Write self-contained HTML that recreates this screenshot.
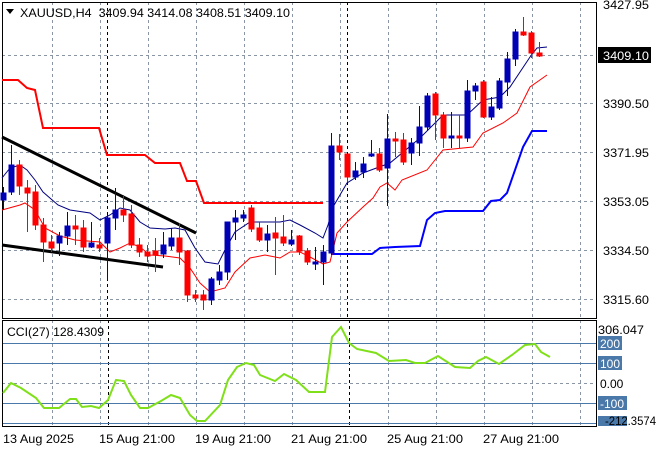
<!DOCTYPE html>
<html><head><meta charset="utf-8"><style>
html,body{margin:0;padding:0;background:#fff;}
svg{display:block;font-family:"Liberation Sans",Tahoma,sans-serif;}
</style></head><body>
<svg width="660" height="450" viewBox="0 0 660 450" xmlns="http://www.w3.org/2000/svg">
<rect width="660" height="450" fill="#fff"/>
<g stroke="#8a96a3" stroke-width="1" stroke-dasharray="3,3" fill="none">
<path d="M2 55.5H597M2 103.5H597M2 152.5H597M2 201.5H597M2 250.5H597M2 299.5H597"/>
<path d="M52.5 2V318M100.5 2V318M148.5 2V318M196.5 2V318M244.5 2V318M292.5 2V318M340.5 2V318M388.5 2V318M436.5 2V318M484.5 2V318M532.5 2V318M580.5 2V318"/>
<path d="M52.5 320V426M100.5 320V426M148.5 320V426M196.5 320V426M244.5 320V426M292.5 320V426M388.5 320V426M436.5 320V426M484.5 320V426M532.5 320V426M580.5 320V426"/>
<path d="M2 383.5H597"/>
</g>
<g stroke="#000" stroke-dasharray="3,3"><path d="M107.5 2V318M347.5 2V318M108.5 320V426M349.5 320V426"/></g>
<g stroke="#4a78a8" stroke-width="1"><path d="M2 343.5H597M2 363.5H597M2 403.5H597M2 423.5H597"/></g>
<rect x="2.5" y="2.5" width="594" height="316" fill="none" stroke="#000"/>
<rect x="2.5" y="320.5" width="594" height="106" fill="none" stroke="#000"/>
<polyline fill="none" stroke="#f00" stroke-width="2" points="2,80 18,80 27,88 35,90 43,128 99,128 107,155 145,155 155,163 180,163 187,181 196,181 204,203 323,203"/>
<polyline fill="none" stroke="#00f" stroke-width="2" points="331,254 372,254 380,248 395,247 420,246 427,220 435,213 445,211 483,211 491,201 500,200 507,193 523,147 532,131 547,131"/>
<line x1="2" y1="137" x2="196" y2="233" stroke="#000" stroke-width="3"/>
<line x1="2" y1="245" x2="163" y2="267" stroke="#000" stroke-width="3"/>
<polyline fill="none" stroke="#000080" stroke-width="1" points="2,178 10,168 20,165 27,170 35,180 43,192 58,205 70,210 90,213 100,220 110,215 120,208 130,210 140,222 150,228 165,229 175,228 185,230 195,248 205,262 218,264 225,250 235,232 250,222 265,222 280,222 290,220 300,225 315,233 323,238 328,225 333,207 347,183 363,173 390,163 420,138 443,115 467,115 483,100 500,97 510,87 530,57 537,48 547,47"/>
<polyline fill="none" stroke="#f00" stroke-width="1" points="2,210 20,205 25,203 35,210 45,228 60,236 75,240 100,242 110,252 120,248 130,243 140,247 150,255 165,256 180,258 190,268 200,283 210,292 225,288 235,272 250,258 265,255 280,258 290,252 300,252 310,257 323,264 330,262 333,250 337,233 347,222 363,207 373,198 380,187 387,183 395,190 402,180 427,170 443,150 473,147 483,133 503,123 517,113 530,87 547,75"/>
<g>
<g stroke="#0000b4" fill="#0000b4">
<path d="M3.5 187V210M11.5 145V195M59.5 232V256M67.5 212V245M91.5 222V248M107.5 215V280M115.5 188V230M163.5 232V258M171.5 228V250M211.5 277V305M219.5 265V285M227.5 222V280M235.5 210V240M243.5 210V222M267.5 225V252M291.5 230V246M315.5 247V270M323.5 245V285M331.5 133V255M355.5 162V180M363.5 157V178M371.5 140V157M387.5 114V206M411.5 138V165M419.5 106V156M427.5 93V131M451.5 112V148M467.5 80V142M475.5 83V100M491.5 97V120M499.5 78V110M507.5 52V96M515.5 29V66"/>
<rect x="1" y="193" width="5" height="7"/><rect x="9" y="165" width="5" height="27"/><rect x="57" y="236" width="5" height="7"/><rect x="65" y="226" width="5" height="10"/><rect x="89" y="243" width="5" height="4"/><rect x="105" y="218" width="5" height="25"/><rect x="113" y="210" width="5" height="8"/><rect x="161" y="245" width="5" height="9"/><rect x="169" y="238" width="5" height="8"/><rect x="209" y="279" width="5" height="21"/><rect x="217" y="272" width="5" height="8"/><rect x="225" y="222" width="5" height="50"/><rect x="233" y="218" width="5" height="4"/><rect x="241" y="215" width="5" height="3"/><rect x="265" y="234" width="5" height="6"/><rect x="289" y="240" width="5" height="4"/><rect x="313" y="262" width="5" height="2"/><rect x="321" y="252" width="5" height="10"/><rect x="329" y="146" width="5" height="107"/><rect x="353" y="171" width="5" height="6"/><rect x="361" y="164" width="5" height="8"/><rect x="369" y="154" width="5" height="2"/><rect x="385" y="139" width="5" height="29"/><rect x="409" y="143" width="5" height="10"/><rect x="417" y="127" width="5" height="16"/><rect x="425" y="96" width="5" height="31"/><rect x="449" y="136" width="5" height="2"/><rect x="465" y="91" width="5" height="47"/><rect x="473" y="86" width="5" height="5"/><rect x="489" y="107" width="5" height="10"/><rect x="497" y="81" width="5" height="27"/><rect x="505" y="59" width="5" height="23"/><rect x="513" y="32" width="5" height="27"/>
</g>
<g stroke="#f00" fill="#f00">
<path d="M19.5 160V195M27.5 180V232M35.5 185V230M43.5 218V262M51.5 235V252M75.5 215V245M83.5 220V252M99.5 238V252M123.5 195V222M131.5 205V248M139.5 238V257M147.5 245V262M155.5 238V272M179.5 223V265M187.5 250V302M195.5 290V302M203.5 290V310M251.5 205V232M259.5 222V242M275.5 217V275M283.5 215V246M299.5 235V255M307.5 248V265M339.5 134V160M347.5 154V182M379.5 148V172M395.5 132V157M403.5 133V165M435.5 92V140M443.5 112V148M459.5 115V148M483.5 80V118M523.5 17V36M531.5 31V58M539.5 42V57"/>
<rect x="17" y="165" width="5" height="21"/><rect x="25" y="188" width="5" height="5"/><rect x="33" y="192" width="5" height="33"/><rect x="41" y="225" width="5" height="17"/><rect x="49" y="242" width="5" height="6"/><rect x="73" y="226" width="5" height="3"/><rect x="81" y="228" width="5" height="19"/><rect x="97" y="245" width="5" height="3"/><rect x="121" y="210" width="5" height="5"/><rect x="129" y="214" width="5" height="31"/><rect x="137" y="245" width="5" height="7"/><rect x="145" y="252" width="5" height="4"/><rect x="153" y="251" width="5" height="4"/><rect x="177" y="238" width="5" height="14"/><rect x="185" y="251" width="5" height="44"/><rect x="193" y="295" width="5" height="3"/><rect x="201" y="295" width="5" height="5"/><rect x="249" y="208" width="5" height="21"/><rect x="257" y="228" width="5" height="12"/><rect x="273" y="233" width="5" height="5"/><rect x="281" y="237" width="5" height="6"/><rect x="297" y="236" width="5" height="15"/><rect x="305" y="251" width="5" height="11"/><rect x="337" y="146" width="5" height="6"/><rect x="345" y="154" width="5" height="23"/><rect x="377" y="154" width="5" height="16"/><rect x="393" y="139" width="5" height="2"/><rect x="401" y="140" width="5" height="22"/><rect x="433" y="94" width="5" height="21"/><rect x="441" y="115" width="5" height="23"/><rect x="457" y="136" width="5" height="2"/><rect x="481" y="82" width="5" height="35"/><rect x="521" y="32" width="5" height="3"/><rect x="529" y="33" width="5" height="20"/><rect x="537" y="53" width="5" height="3"/>
</g>
</g>
<polyline fill="none" stroke="#7fe019" stroke-width="2" points="3,393 11,383 21,388 36,398 44,408 59,408 70,399 76,399 82,407 91,406 99,408 108,400 116,380 124,381 131,395 140,408 148,408 161,401 171,395 180,398 190,415 197,421 205,421 220,405 228,380 237,367 246,363 254,365 260,375 275,381 284,374 296,380 309,392 325,392 332,337 341,327 349,343 357,349 376,353 389,361 406,360 415,363 425,363 438,356 455,367 470,368 478,361 486,357 499,364 512,355 525,345 535,344 541,352 550,357"/>
<g font-size="12" fill="#000">
<path d="M6 9H14L10 14Z" fill="#000"/>
<text x="20" y="17" textLength="270" lengthAdjust="spacingAndGlyphs" xml:space="preserve">XAUUSD,H4  3409.94 3414.08 3408.51 3409.10</text>
<text x="7" y="336" textLength="97" lengthAdjust="spacingAndGlyphs">CCI(27) 128.4309</text>
<text x="603" y="9" textLength="46" lengthAdjust="spacingAndGlyphs">3427.95</text>
<text x="603" y="108" textLength="46" lengthAdjust="spacingAndGlyphs">3390.50</text>
<text x="603" y="157" textLength="46" lengthAdjust="spacingAndGlyphs">3371.95</text>
<text x="603" y="206" textLength="46" lengthAdjust="spacingAndGlyphs">3353.05</text>
<text x="603" y="255" textLength="46" lengthAdjust="spacingAndGlyphs">3334.50</text>
<text x="603" y="304" textLength="46" lengthAdjust="spacingAndGlyphs">3315.60</text>
<rect x="598" y="47" width="53" height="16" fill="#000"/>
<text x="603" y="60" fill="#fff" textLength="46" lengthAdjust="spacingAndGlyphs">3409.10</text>
<text x="598" y="334" textLength="46" lengthAdjust="spacingAndGlyphs">306.047</text>
<rect x="598" y="336" width="24" height="14" fill="#4a78a8"/><text x="600" y="348" fill="#fff">200</text>
<rect x="598" y="356" width="24" height="14" fill="#4a78a8"/><text x="600" y="368" fill="#fff">100</text>
<text x="600" y="388">0.00</text>
<rect x="598" y="396" width="29" height="14" fill="#4a78a8"/><text x="600" y="408" fill="#fff">-100</text>
<rect x="598" y="416" width="29" height="10" fill="#4a78a8"/>
<text x="605" y="425" textLength="51" lengthAdjust="spacingAndGlyphs">-212.3574</text>
<text x="3" y="443" textLength="71" lengthAdjust="spacingAndGlyphs">13 Aug 2025</text>
<text x="99" y="443" textLength="76" lengthAdjust="spacingAndGlyphs">15 Aug 21:00</text>
<text x="195" y="443" textLength="76" lengthAdjust="spacingAndGlyphs">19 Aug 21:00</text>
<text x="291" y="443" textLength="76" lengthAdjust="spacingAndGlyphs">21 Aug 21:00</text>
<text x="387" y="443" textLength="76" lengthAdjust="spacingAndGlyphs">25 Aug 21:00</text>
<text x="483" y="443" textLength="76" lengthAdjust="spacingAndGlyphs">27 Aug 21:00</text>
</g>
</svg>
</body></html>
